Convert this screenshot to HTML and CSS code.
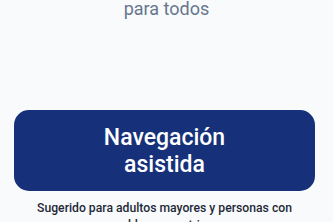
FILE: index.html
```html
<!DOCTYPE html>
<html lang="es">
<head>
  <meta charset="UTF-8">
  <title>Navegación asistida</title>
  <meta name="viewport" content="width=device-width, initial-scale=1.0">
  <link rel="stylesheet" href="styles.css">
</head>
<body>
  <div class="screen">
    <p class="subtitle">para todos</p>

    <div class="choice">
      <button class="big-btn" type="button">Navegación<br>asistida</button>
      <p class="hint">Sugerido para adultos mayores y personas con problemas motrices</p>
    </div>
  </div>
</body>
</html>
```

FILE: styles.css
```css
* { margin: 0; padding: 0; box-sizing: border-box; }
html, body {
  height: 100%;
  overflow: hidden;
}
body {
  background-color: #f8fafc;
  font-family: Roboto, 'Noto Sans', Arial, sans-serif;
  color: #1f2937;
}

.screen {
  display: flex;
  flex-direction: column;
}

.subtitle {
  font-size: 18px;
  line-height: 18px;
  color: #66768d;
  padding: 0 31px;
  text-align: center;
}

.choice {
  margin-top: 92px;
  padding: 0 18px 0 14px;
  display: flex;
  flex-direction: column;
  align-items: stretch;
}

.big-btn {
  display: block;
  width: 100%;
  height: 81px;
  padding: 13px 8px;
  border: none;
  border-radius: 15px;
  background-color: #16317a;
  color: #fff;
  font-family: inherit;
  font-size: 23px;
  font-weight: 500;
  line-height: 27px;
  text-align: center;
  cursor: pointer;
}

.hint {
  margin-top: 9px;
  padding: 0 12px;
  font-size: 12.2px;
  font-weight: 500;
  line-height: 17px;
  color: #1f2937;
  text-align: center;
}
```
